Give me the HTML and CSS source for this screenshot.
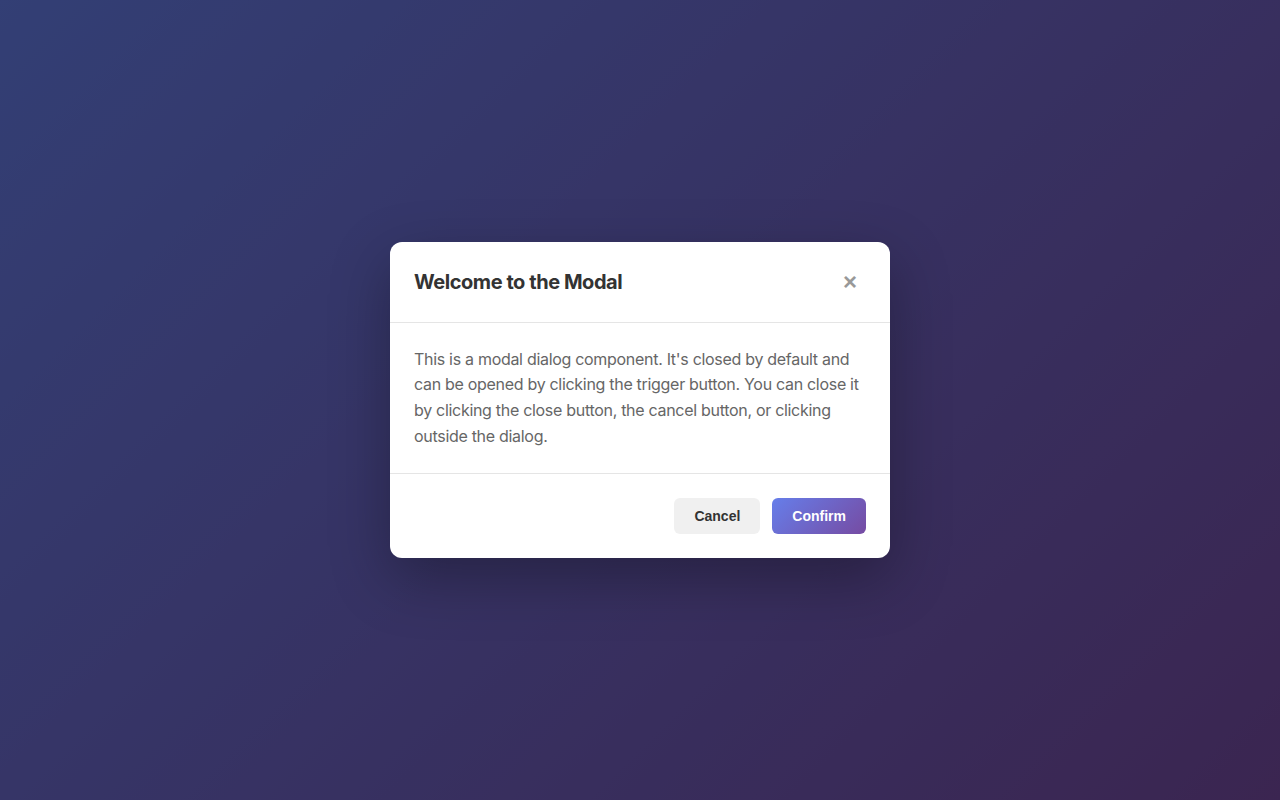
FILE: index.html
```html
<!DOCTYPE html>
<html lang="en">
<head>
<meta charset="utf-8">
<title>Modal</title>
<link rel="stylesheet" href="styles.css">
</head>
<body>
<div class="page">
  <div class="overlay">
    <div class="modal" role="dialog" aria-labelledby="modal-title">
      <div class="modal-header">
        <h2 class="modal-title" id="modal-title">Welcome to the Modal</h2>
        <button class="close-btn" aria-label="Close">&times;</button>
      </div>
      <div class="modal-body">
        <p>This is a modal dialog component. It's closed by default and can be opened by clicking the trigger button. You can close it by clicking the close button, the cancel button, or clicking outside the dialog.</p>
      </div>
      <div class="modal-footer">
        <button class="btn btn-cancel">Cancel</button>
        <button class="btn btn-confirm">Confirm</button>
      </div>
    </div>
  </div>
</div>
</body>
</html>
```
FILE: styles.css
```css
* { box-sizing: border-box; }
html, body { margin: 0; padding: 0; height: 100%; }
body {
  font-family: Inter, "Noto Sans", sans-serif;
  background: linear-gradient(135deg, #667eea 0%, #764ba2 100%);
}
.page { height: 100vh; }
.overlay {
  height: 100%;
  background: rgba(0, 0, 0, 0.5);
  display: flex;
  align-items: center;
  justify-content: center;
}
.modal {
  width: 500px;
  background: #fff;
  border-radius: 12px;
  box-shadow: 0 20px 60px rgba(0, 0, 0, 0.3);
  overflow: hidden;
}
.modal-header {
  display: flex;
  align-items: center;
  justify-content: space-between;
  padding: 24px;
  border-bottom: 1px solid #e5e5e5;
}
.modal-title {
  margin: 0;
  font-size: 20px;
  font-weight: 700;
  color: #333;
  line-height: 32px;
  letter-spacing: -0.45px;
}
.close-btn {
  width: 32px;
  height: 32px;
  border: none;
  background: none;
  color: #999;
  font-size: 24px;
  font-weight: 700;
  line-height: 1;
  padding: 0;
  font-family: "Liberation Sans", Arial, sans-serif;
  cursor: pointer;
}
.modal-body {
  padding: 24px;
  border-bottom: 1px solid #e5e5e5;
}
.modal-body p {
  margin: 0;
  font-size: 16px;
  line-height: 1.6;
  color: #666;
  letter-spacing: -0.3px;
}
.modal-footer {
  display: flex;
  justify-content: flex-end;
  gap: 12px;
  padding: 24px;
}
.btn {
  height: 36px;
  padding: 0 20px;
  border: none;
  border-radius: 6px;
  font-family: "Liberation Sans", Arial, sans-serif;
  font-size: 14px;
  font-weight: 700;
  cursor: pointer;
}
.btn-cancel { background: #f0f0f0; color: #333; }
.btn-confirm {
  background: linear-gradient(135deg, #667eea 0%, #764ba2 100%);
  color: #fff;
}
```
